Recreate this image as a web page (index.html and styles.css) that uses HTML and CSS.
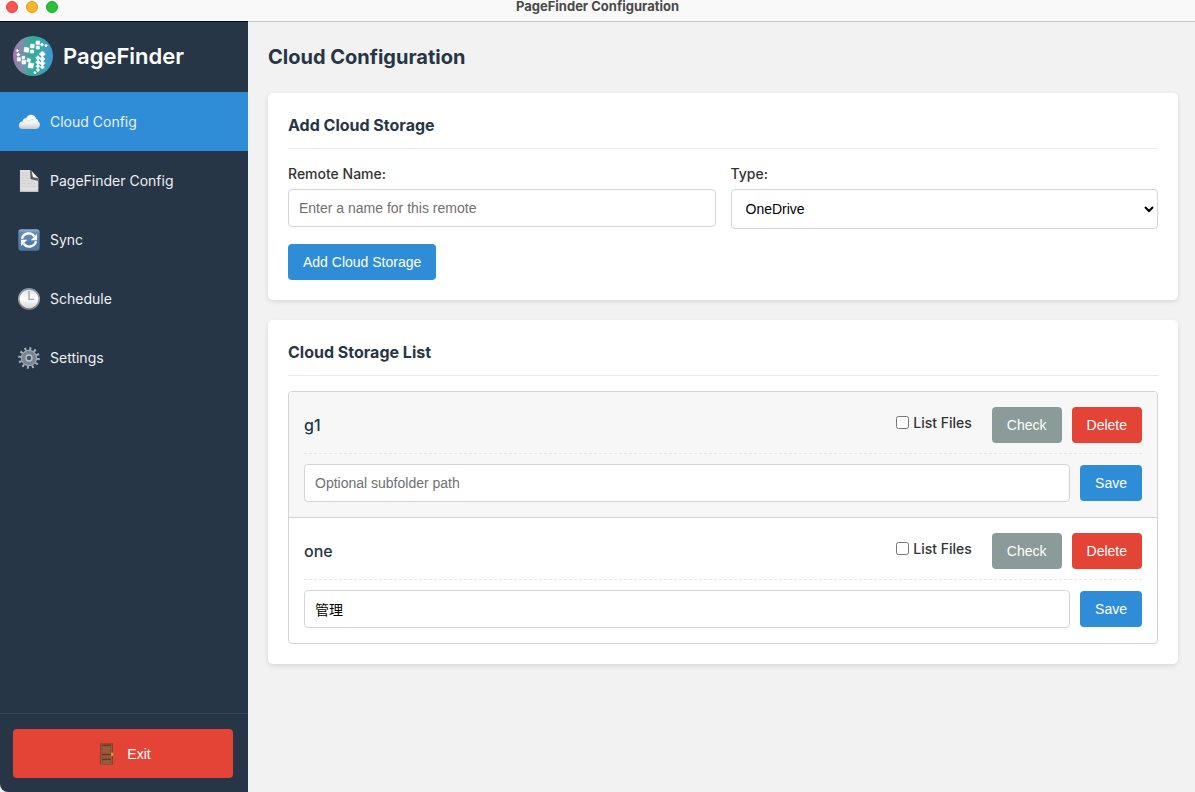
FILE: index.html
```html
<!DOCTYPE html>
<html lang="en">
<head>
<meta charset="utf-8">
<title>PageFinder Configuration</title>
<link rel="stylesheet" href="styles.css">
</head>
<body>
<header class="titlebar">
  <div class="lights"><span class="light close"></span><span class="light minimize"></span><span class="light maximize"></span></div>
  <div class="window-title">PageFinder Configuration</div>
</header>
<div class="app">
  <aside class="sidebar">
    <div class="brand">
      <svg class="logo" viewBox="9 18 120 120" aria-hidden="true">
        <defs><linearGradient id="globe"><stop offset="0" stop-color="#a276b0"/><stop offset=".22" stop-color="#7c8fa9"/><stop offset=".48" stop-color="#2fae96"/><stop offset=".75" stop-color="#3ea4b8"/><stop offset="1" stop-color="#3f97d6"/></linearGradient></defs>
        <circle cx="69" cy="78" r="60" fill="url(#globe)"/>
        <g fill="#fff" stroke="#fff" stroke-width="2">
          <path d="M44 52l13 2-2 13-13-2z"/>
          <path d="M62 42l11 1-1 11-11-1z"/>
          <path d="M78 33l11 0 0 10-11 0z"/>
          <path d="M61 60l10 0 0 9-10 0z"/>
          <path d="M79 48l9 0 0 9-9 0z"/>
          <path d="M96 39l5 5-5 5-5-5z"/>
          <path d="M108 43l4 4-4 4-4-4z"/>
          <path d="M22 58l4 4-4 4-4-4z"/>
          <path d="M25 69l5 5-5 5-5-5z"/>
          <path d="M22 83l9 0 0 10-9 0z"/>
          <path d="M36 79l8 0 0 8-8 0z"/>
          <path d="M36 91l11 0 0 11-11 0z"/>
          <path d="M53 85l9 3-3 9-9-3z"/>
          <path d="M57 98l14 3-3 14-14-3z"/>
          <path d="M97 63l9 9-9 9-9-9z"/>
          <path d="M84 77l7 7-7 7-7-7z"/>
          <path d="M97 79l8 8-8 8-8-8z"/>
          <path d="M84 90l7 7-7 7-7-7z"/>
          <path d="M97 92l8 8-8 8-8-8z"/>
          <path d="M84 103l6 6-6 6-6-6z"/>
          <path d="M97 105l6 6-6 6-6-6z"/>
          <path d="M84 115l5 5-5 5-5-5z"/>
          <path d="M75 124l4 4-4 4-4-4z"/>
        </g>
      </svg>
      <span class="brand-name">PageFinder</span>
    </div>
    <nav class="nav">
      <a class="nav-item active" href="#cloud">
        <svg class="icon" viewBox="0 0 66 66" aria-hidden="true">
          <defs><linearGradient id="cloud" x2="0" y2="1"><stop offset="0" stop-color="#fff"/><stop offset=".6" stop-color="#f2f2f2"/><stop offset="1" stop-color="#c9c9c9"/></linearGradient></defs>
          <path fill="url(#cloud)" d="M14 54C6 54 2 49 3 42c1-7 5-10 11-11 0-6 5-10 11-9 2-7 7-11 14-11 9 0 14 5 15 12 5 1 7 5 7 9 4 3 6 8 4 13-2 6-6 9-12 9z"/>
          <path fill="none" stroke="#d2d2d2" stroke-width="2" d="M23 27c3-1 6 0 8 3 3-1 6-2 8-5 4 0 8 0 10 2M14 35c3-1 5 0 7 2"/>
        </svg>
        <span>Cloud Config</span>
      </a>
      <a class="nav-item" href="#pagefinder">
        <svg class="icon" viewBox="0 0 66 66" aria-hidden="true">
          <defs><linearGradient id="fold" x1="0" y1="1" x2="1" y2="0"><stop offset="0" stop-color="#333"/><stop offset="1" stop-color="#999"/></linearGradient></defs>
          <path fill="#dedede" d="M6 0h31l24 24v41H6z"/>
          <path fill="url(#fold)" d="M36 0h3l22 24v9L38 27z"/>
          <path fill="#f8f8f8" d="M41 4l19 20-15-2z"/>
          <path stroke="#cacaca" stroke-width="2" d="M11 10h22M11 17h22M11 25h24M11 33h40M11 41h44M11 49h44"/>
          <path stroke="#c9c9c9" stroke-width="2" d="M7 0v65M6 64h55"/>
        </svg>
        <span>PageFinder Config</span>
      </a>
      <a class="nav-item" href="#sync">
        <svg class="icon" viewBox="0 0 66 66" aria-hidden="true">
          <defs><linearGradient id="tile" x2="0" y2="1"><stop offset="0" stop-color="#92b3d3"/><stop offset=".15" stop-color="#668eb5"/><stop offset="1" stop-color="#4c769f"/></linearGradient></defs>
          <rect x="1" y="1" width="64" height="64" rx="9" fill="url(#tile)"/>
          <path fill="none" stroke="#fff" stroke-width="7" d="M12 29C16 11 40 8 49 22M54 37C50 55 26 58 17 44"/>
          <path fill="#fff" d="M57 15v19H38zM9 51V32h19z"/>
        </svg>
        <span>Sync</span>
      </a>
      <a class="nav-item" href="#schedule">
        <svg class="icon" viewBox="0 0 66 66" aria-hidden="true">
          <defs><linearGradient id="rim" x2="0" y2="1"><stop offset="0" stop-color="#8094aa"/><stop offset=".5" stop-color="#a6a6a6"/><stop offset="1" stop-color="#777"/></linearGradient><linearGradient id="face" x2="0" y2="1"><stop offset="0" stop-color="#e3e3e3"/><stop offset=".5" stop-color="#fff"/><stop offset="1" stop-color="#d5d5d5"/></linearGradient></defs>
          <circle cx="33" cy="33" r="33" fill="url(#rim)"/>
          <circle cx="33" cy="33" r="28" fill="url(#face)"/>
          <path fill="none" stroke="#a0a0a0" stroke-width="4" d="M33 9v25h15"/>
        </svg>
        <span>Schedule</span>
      </a>
      <a class="nav-item" href="#settings">
        <svg class="icon" viewBox="0 0 66 66" aria-hidden="true">
          <circle cx="33" cy="33" r="28" fill="none" stroke="#a5b3c0" stroke-width="9" stroke-dasharray="6 8.66"/>
          <circle cx="33" cy="33" r="17" fill="none" stroke="#7d868e" stroke-width="14"/>
          <circle cx="33" cy="33" r="23" fill="none" stroke="#a3aeb8" stroke-width="3"/>
          <circle cx="33" cy="33" r="9" fill="#46525e" stroke="#b9c9d8" stroke-width="4"/>
          <circle cx="33" cy="33" r="4" fill="#4c5965"/>
        </svg>
        <span>Settings</span>
      </a>
    </nav>
    <div class="sidebar-footer">
      <button class="exit" type="button">
        <svg class="icon" viewBox="0 0 66 66" aria-hidden="true">
          <path fill="#7a4529" d="M15 1h39v64H15z"/>
          <path fill="#95583a" d="M18 4h33v61H18z"/>
          <path fill="#8a4f32" d="M21 7h27v23H21zM21 33h27v4H21zM21 48h27v12H21z"/>
          <path fill="#985b3c" d="M24 10h21v20H24zM24 52h21v8H24z"/>
          <path fill="#5d321e" d="M21 5h27v3H21zM21 33h27v3H21zM21 47h27v3H21z"/>
          <path fill="#d79a30" d="M48 29h7v10h-7z"/>
        </svg>
        <span>Exit</span>
      </button>
    </div>
  </aside>
  <main class="content">
    <h1 class="page-title">Cloud Configuration</h1>
    <section class="card">
      <h2 class="card-title">Add Cloud Storage</h2>
      <form>
        <div class="form-row">
          <div class="field">
            <label class="label" for="remote-name">Remote Name:</label>
            <input class="input" id="remote-name" type="text" placeholder="Enter a name for this remote">
          </div>
          <div class="field">
            <label class="label" for="remote-type">Type:</label>
            <select class="input select" id="remote-type"><option>OneDrive</option></select>
          </div>
        </div>
        <button class="btn primary" type="button">Add Cloud Storage</button>
      </form>
    </section>
    <section class="card">
      <h2 class="card-title">Cloud Storage List</h2>
      <ul class="storage-list">
        <li class="storage-item highlighted">
          <div class="storage-head">
            <span class="storage-name">g1</span>
            <label class="label check-label" for="list-g1"><input class="checkbox" id="list-g1" type="checkbox">List Files</label>
            <button class="btn neutral" type="button">Check</button>
            <button class="btn danger" type="button">Delete</button>
          </div>
          <div class="storage-path">
            <input class="input" type="text" aria-label="Subfolder path for g1" placeholder="Optional subfolder path">
            <button class="btn primary" type="button">Save</button>
          </div>
        </li>
        <li class="storage-item">
          <div class="storage-head">
            <span class="storage-name">one</span>
            <label class="label check-label" for="list-one"><input class="checkbox" id="list-one" type="checkbox">List Files</label>
            <button class="btn neutral" type="button">Check</button>
            <button class="btn danger" type="button">Delete</button>
          </div>
          <div class="storage-path">
            <input class="input" type="text" aria-label="Subfolder path for one" placeholder="Optional subfolder path" value="管理">
            <button class="btn primary" type="button">Save</button>
          </div>
        </li>
      </ul>
    </section>
  </main>
</div>
</body>
</html>
```
FILE: styles.css
```css
* { box-sizing: border-box; }

body {
  margin: 0;
  min-height: 100vh;
  display: flex;
  flex-direction: column;
  background: #f2f2f2;
  color: #333;
  font: 14px/20px Inter, "Noto Sans CJK SC", sans-serif;
}

.titlebar {
  display: grid;
  grid-template-columns: 1fr auto 1fr;
  align-items: start;
  height: 22px;
  padding: 1px 6px 0;
  background: #f9f9f9;
  border-bottom: 1px solid #c8c8c8;
}
.lights { display: flex; gap: 8px; }
.light { width: 12px; height: 12px; border-radius: 50%; border: 1px solid; }
.close { background: #ff5550; border-color: #e2423d; }
.minimize { background: #fdb528; border-color: #df9a1b; }
.maximize { background: #28c235; border-color: #1aa528; }
.window-title { font-size: 13px; line-height: 10px; font-weight: 700; color: #4a4a4a; }

.app { flex: 1; display: flex; }

.sidebar {
  flex: 0 0 248px;
  display: flex;
  flex-direction: column;
  margin-top: -1px;
  border-top: 1px solid #06090c;
  border-bottom-left-radius: 8px;
  background: #273646;
}
.brand { display: flex; align-items: center; gap: 10px; padding: 14px 13px 16px; }
.logo { width: 40px; height: 40px; }
.brand-name { color: #fff; font-size: 22px; line-height: 28px; font-weight: 600; }

.nav { flex: 1; }
.nav-item {
  display: flex;
  align-items: center;
  gap: 10px;
  height: 59px;
  padding: 0 18px;
  color: #ecf0f1;
  text-decoration: none;
}
.nav-item.active { background: #2f8dd8; }
.icon { width: 22px; height: 22px; flex: none; }

.sidebar-footer { padding: 15px 15px 14px 13px; border-top: 1px solid #34495e; }
.exit {
  display: flex;
  align-items: center;
  justify-content: center;
  gap: 10px;
  width: 100%;
  height: 49px;
  border: 0;
  border-radius: 4px;
  background: #e34435;
  color: #fff;
  font: 14px/16px "Liberation Sans", Arial, sans-serif;
}

.content { flex: 1; min-width: 0; padding: 20px 17px 20px 20px; }
.page-title { margin: 0 0 20px; color: #273646; font-size: 20px; line-height: 30px; padding-bottom: 1px; font-weight: 700; }

.card {
  margin-bottom: 20px;
  padding: 20px;
  border-radius: 5px;
  background: #fff;
  box-shadow: 0 2px 5px rgba(0, 0, 0, .1);
}
.card-title {
  margin: 0 0 15px;
  padding-bottom: 10px;
  border-bottom: 1px solid #eaeaea;
  color: #273646;
  font-size: 16px;
  line-height: 25px;
  font-weight: 700;
}

.form-row { display: flex; align-items: flex-start; gap: 15px; margin-bottom: 15px; }
.field { flex: 1; min-width: 0; }
.label { display: block; margin-bottom: 5px; font-weight: 500; }

.input {
  display: block;
  width: 100%;
  height: 38px;
  padding: 0 10px;
  border: 1px solid #d4d4d4;
  border-radius: 4px;
  background: #fff;
  color: #000;
  font: 14px/16px "Liberation Sans", Arial, "Noto Sans CJK SC", sans-serif;
}
.input::placeholder { color: #707070; }
.select { height: 40px; padding-right: 0; }

.btn {
  flex: none;
  height: 36px;
  padding: 0 15px;
  border: 0;
  border-radius: 4px;
  color: #fff;
  font: 14px/16px "Liberation Sans", Arial, sans-serif;
}
.primary { background: #2f8dd8; }
.neutral { background: #8a9b99; }
.danger { background: #e34435; }

.storage-list {
  margin: 0;
  padding: 0;
  list-style: none;
  border: 1px solid #d4d4d4;
  border-radius: 4px;
  overflow: hidden;
}
.storage-item { padding: 15px; }
.storage-item + .storage-item { border-top: 1px solid #d4d4d4; }
.highlighted { background: #f7f7f7; }
.storage-head {
  display: flex;
  align-items: center;
  gap: 10px;
  padding-bottom: 10px;
  border-bottom: 1px dashed #e6e6e6;
}
.storage-name { flex: 1; color: #273646; font-size: 16px; font-weight: 500; }
.check-label { display: flex; align-items: center; gap: 4px; margin-right: 10px; }
.checkbox { margin: 0; }
.storage-path { display: flex; align-items: center; gap: 10px; padding-top: 10px; }
```
